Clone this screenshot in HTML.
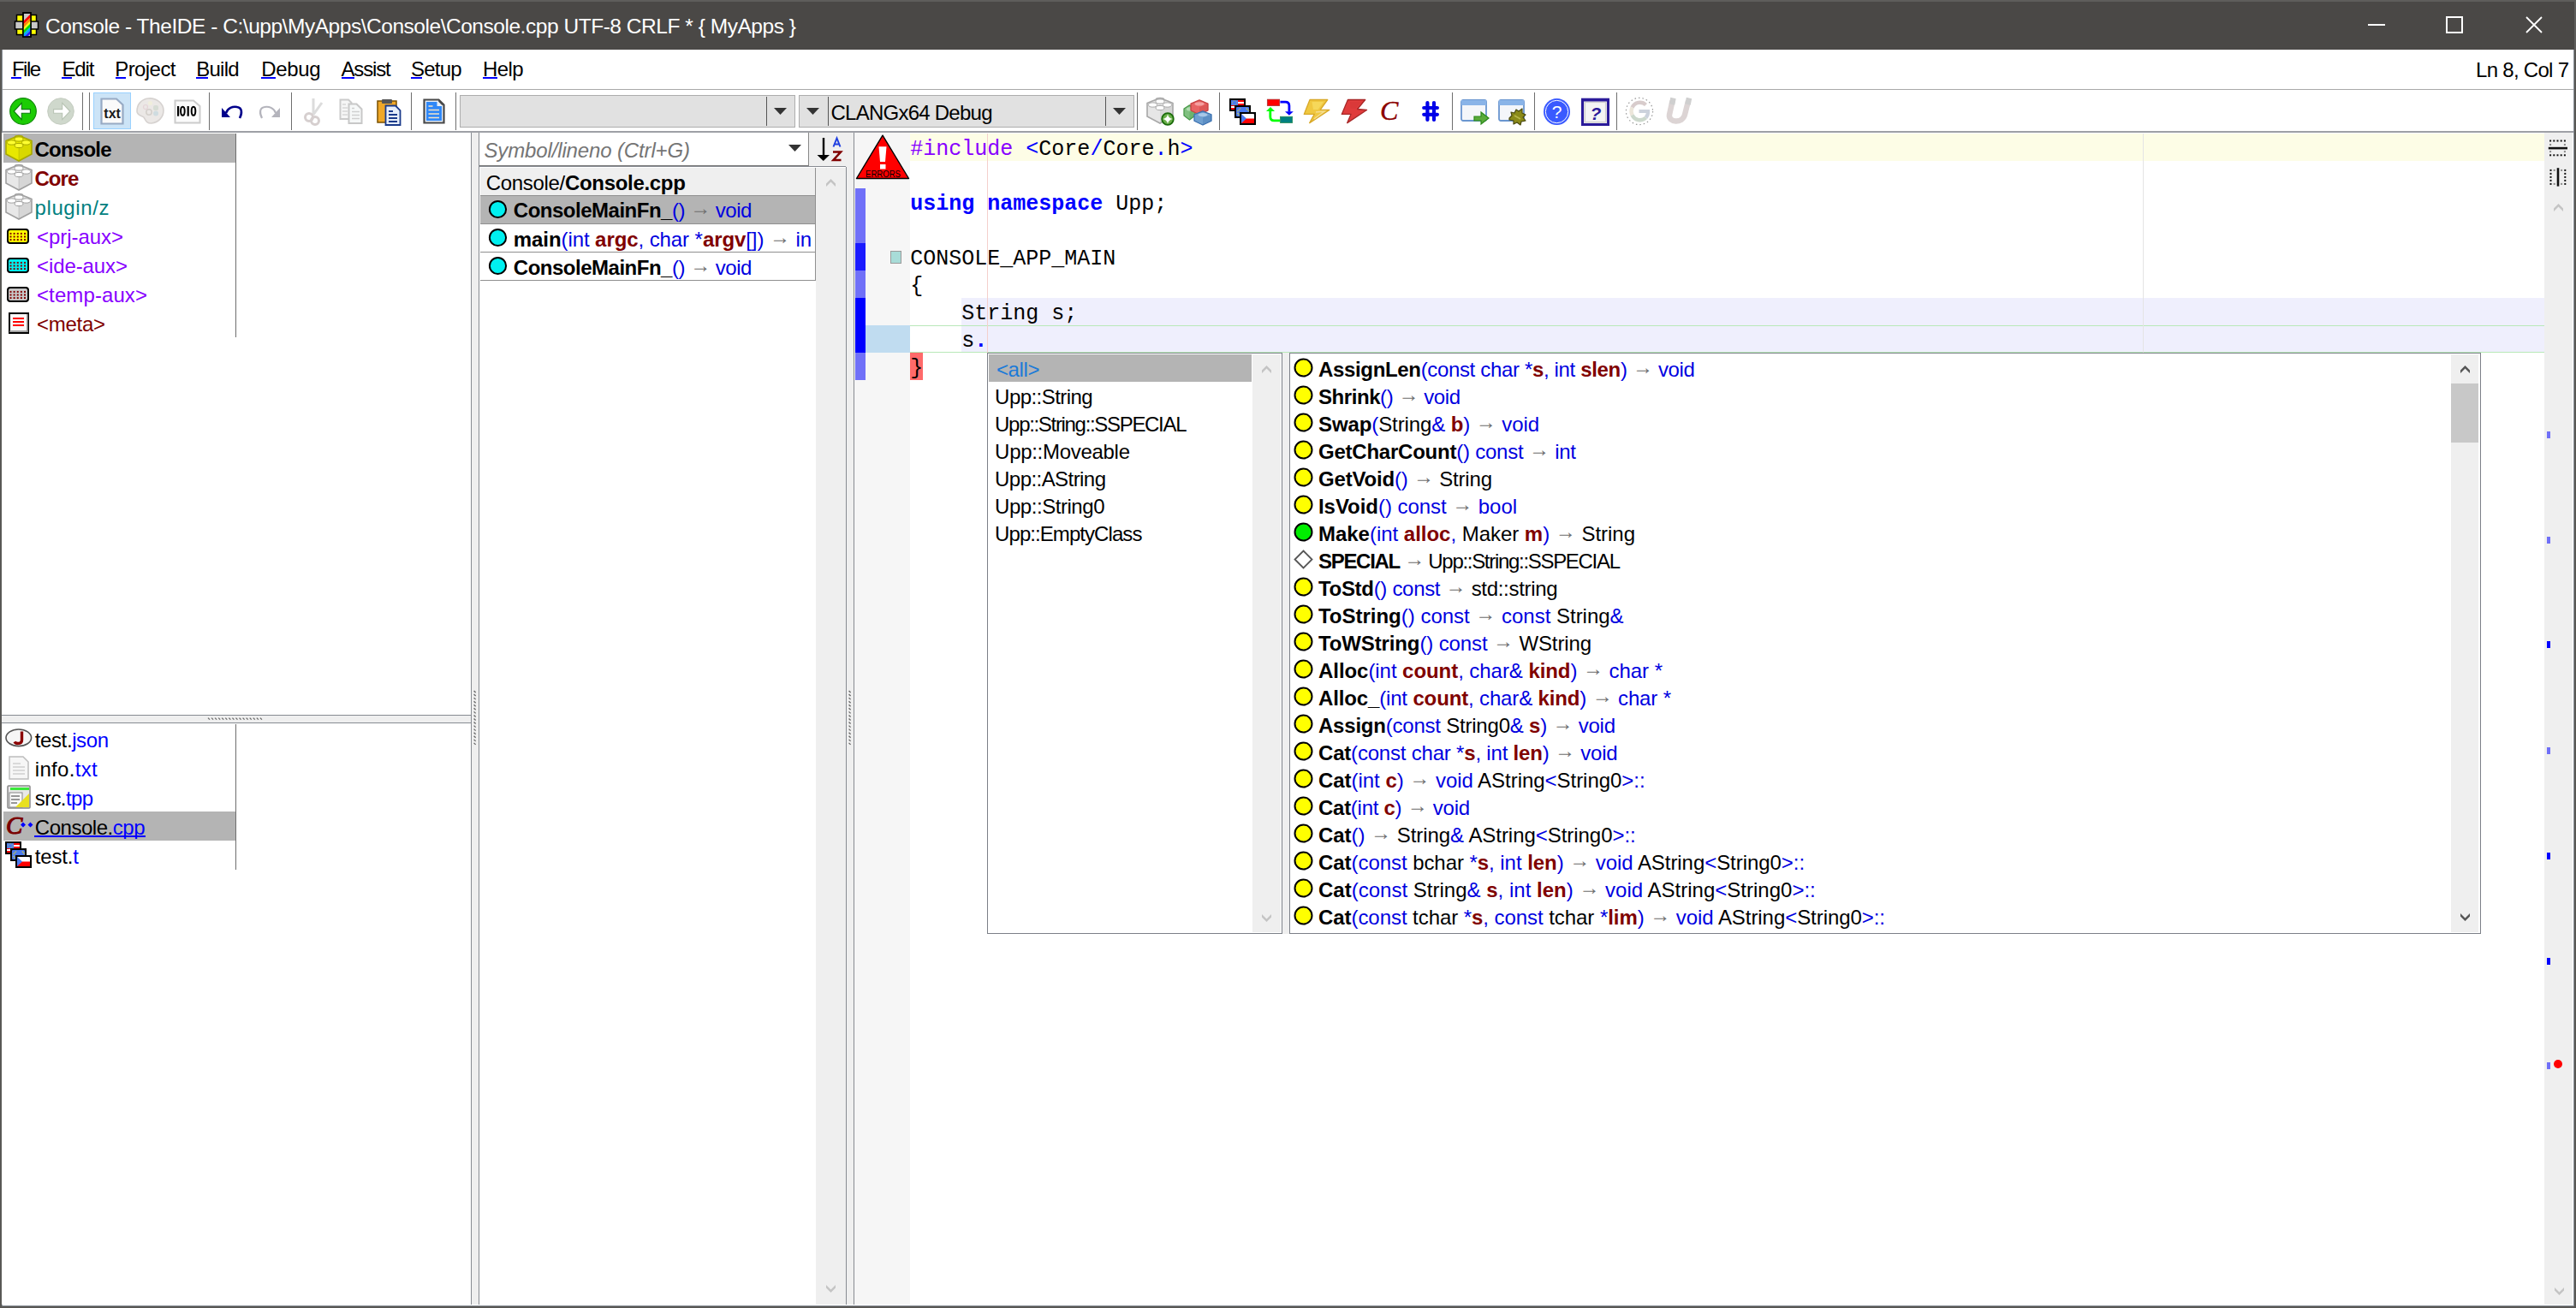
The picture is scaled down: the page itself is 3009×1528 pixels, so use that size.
<!DOCTYPE html>
<html><head><meta charset="utf-8"><style>html,body{margin:0;padding:0;width:3009px;height:1528px;overflow:hidden;background:#fff}svg{overflow:visible}</style></head><body>
<div style="position:absolute;left:0px;top:0px;width:3009px;height:1528px;background:#595855;"></div>
<div style="position:absolute;left:2px;top:58px;width:1px;height:1468px;background:#8a9098;"></div>
<div style="position:absolute;left:3006px;top:58px;width:1px;height:1468px;background:#8a9098;"></div>
<div style="position:absolute;left:2px;top:1525px;width:3005px;height:1px;background:#8a9098;"></div>
<div style="position:absolute;left:3px;top:58px;width:3003px;height:1467px;background:#ffffff;"></div>
<div style="position:absolute;left:0px;top:0px;width:3009px;height:58px;background:#5e5d5b;"></div>
<div style="position:absolute;left:0px;top:2px;width:3007px;height:56px;background:#4a4846;"></div>
<svg style="position:absolute;left:16px;top:14px" width="30" height="30" viewBox="0 0 30 30">
<rect x="3.5" y="3.5" width="23" height="23" fill="#ffff00" stroke="#000" stroke-width="1.5"/>
<rect x="1.5" y="11" width="27" height="9" fill="#c8c8c8" stroke="#000" stroke-width="1.5"/>
<defs><clipPath id="appc"><rect x="11" y="1" width="9" height="28"/></clipPath></defs>
<rect x="11" y="1" width="9" height="28" fill="#c8c8c8" stroke="#000" stroke-width="1.5"/>
<g clip-path="url(#appc)">
<polygon points="20,2 20,6 11,15 11,11" fill="#ff0000"/>
<polygon points="20,6 20,10 11,19 11,15" fill="#ff8800"/>
<polygon points="20,10 20,13 11,22 11,19" fill="#ffff00"/>
<polygon points="20,13 20,17 11,26 11,22" fill="#00dd00"/>
<polygon points="20,17 20,21 11,30 11,26" fill="#00aaff"/>
<polygon points="20,21 20,25 11,34 11,30" fill="#2222ff"/>
</g>
<rect x="11" y="1" width="9" height="28" fill="none" stroke="#000" stroke-width="1.5"/>
</svg>
<div style="position:absolute;left:53px;top:16.76px;font-family:'Liberation Sans',sans-serif;font-size:24.5px;line-height:normal;color:#ffffff;font-weight:normal;font-style:normal;white-space:pre;letter-spacing:-0.465px;">Console - TheIDE - C:\upp\MyApps\Console\Console.cpp UTF-8 CRLF * { MyApps }</div>
<div style="position:absolute;left:2766px;top:28px;width:20px;height:2px;background:#ffffff;"></div>
<div style="position:absolute;left:2857px;top:19px;width:16px;height:16px;border:2px solid #fff"></div>
<svg style="position:absolute;left:2950px;top:19px" width="20" height="20" viewBox="0 0 20 20"><path d="M1,1 L19,19 M19,1 L1,19" stroke="#fff" stroke-width="1.8"/></svg>
<div style="position:absolute;left:14px;top:66.72px;font-family:'Liberation Sans',sans-serif;font-size:24px;line-height:normal;color:#000;font-weight:normal;font-style:normal;white-space:pre;letter-spacing:-1.557px;">File</div>
<div style="position:absolute;left:13px;top:90px;width:12px;height:2px;background:#0000ff;"></div>
<div style="position:absolute;left:72.4px;top:66.72px;font-family:'Liberation Sans',sans-serif;font-size:24px;line-height:normal;color:#000;font-weight:normal;font-style:normal;white-space:pre;letter-spacing:-1.120px;">Edit</div>
<div style="position:absolute;left:72px;top:90px;width:12px;height:2px;background:#0000ff;"></div>
<div style="position:absolute;left:134.2px;top:66.72px;font-family:'Liberation Sans',sans-serif;font-size:24px;line-height:normal;color:#000;font-weight:normal;font-style:normal;white-space:pre;letter-spacing:-0.567px;">Project</div>
<div style="position:absolute;left:135px;top:90px;width:12px;height:2px;background:#0000ff;"></div>
<div style="position:absolute;left:229.3px;top:66.72px;font-family:'Liberation Sans',sans-serif;font-size:24px;line-height:normal;color:#000;font-weight:normal;font-style:normal;white-space:pre;letter-spacing:-0.769px;">Build</div>
<div style="position:absolute;left:229px;top:90px;width:14px;height:2px;background:#0000ff;"></div>
<div style="position:absolute;left:305.3px;top:66.72px;font-family:'Liberation Sans',sans-serif;font-size:24px;line-height:normal;color:#000;font-weight:normal;font-style:normal;white-space:pre;letter-spacing:-0.359px;">Debug</div>
<div style="position:absolute;left:305px;top:90px;width:17px;height:2px;background:#0000ff;"></div>
<div style="position:absolute;left:398.4px;top:66.72px;font-family:'Liberation Sans',sans-serif;font-size:24px;line-height:normal;color:#000;font-weight:normal;font-style:normal;white-space:pre;letter-spacing:-1.123px;">Assist</div>
<div style="position:absolute;left:399px;top:90px;width:15px;height:2px;background:#0000ff;"></div>
<div style="position:absolute;left:479.9px;top:66.72px;font-family:'Liberation Sans',sans-serif;font-size:24px;line-height:normal;color:#000;font-weight:normal;font-style:normal;white-space:pre;letter-spacing:-0.730px;">Setup</div>
<div style="position:absolute;left:480px;top:90px;width:13px;height:2px;background:#0000ff;"></div>
<div style="position:absolute;left:564.1px;top:66.72px;font-family:'Liberation Sans',sans-serif;font-size:24px;line-height:normal;color:#000;font-weight:normal;font-style:normal;white-space:pre;letter-spacing:-0.586px;">Help</div>
<div style="position:absolute;left:564px;top:90px;width:17px;height:2px;background:#0000ff;"></div>
<div style="position:absolute;left:2892px;top:68.22px;font-family:'Liberation Sans',sans-serif;font-size:24px;line-height:normal;color:#000;font-weight:normal;font-style:normal;white-space:pre;letter-spacing:-0.708px;">Ln 8, Col 7</div>
<div style="position:absolute;left:3px;top:104px;width:3003px;height:1px;background:#a9a9a9;"></div>
<div style="position:absolute;left:3px;top:153px;width:3003px;height:2px;background:#9ea0a6;"></div>
<div style="position:absolute;left:96px;top:108px;width:1px;height:44px;background:#6e6e6e;"></div>
<div style="position:absolute;left:104px;top:108px;width:1px;height:44px;background:#6e6e6e;"></div>
<div style="position:absolute;left:244px;top:108px;width:1px;height:44px;background:#6e6e6e;"></div>
<div style="position:absolute;left:340px;top:108px;width:1px;height:44px;background:#6e6e6e;"></div>
<div style="position:absolute;left:480px;top:108px;width:1px;height:44px;background:#6e6e6e;"></div>
<div style="position:absolute;left:532px;top:108px;width:1px;height:44px;background:#6e6e6e;"></div>
<div style="position:absolute;left:1328px;top:108px;width:1px;height:44px;background:#6e6e6e;"></div>
<div style="position:absolute;left:1424px;top:108px;width:1px;height:44px;background:#6e6e6e;"></div>
<div style="position:absolute;left:1696px;top:108px;width:1px;height:44px;background:#6e6e6e;"></div>
<div style="position:absolute;left:1792px;top:108px;width:1px;height:44px;background:#6e6e6e;"></div>
<div style="position:absolute;left:1888px;top:108px;width:1px;height:44px;background:#6e6e6e;"></div>
<svg style="position:absolute;left:11px;top:114px" width="32" height="32" viewBox="0 0 32 32"><circle cx="16" cy="16" r="15.3" fill="#1ccc04" stroke="#108a08" stroke-width="1.2"/><path d="M5.2,16 L14.3,6.4 L14.3,13.6 L24.4,13.6 L24.4,18.2 L14.3,18.2 L14.3,25.6 Z" fill="#fff" stroke="#0a7a0a" stroke-width="1.1" stroke-linejoin="miter"/></svg>
<svg style="position:absolute;left:55px;top:114px" width="32" height="32" viewBox="0 0 32 32"><circle cx="16" cy="16" r="15.3" fill="#cfd8cc" stroke="#c4ccc0" stroke-width="1"/><path d="M26.8,16 L17.7,6.4 L17.7,13.6 L7.6,13.6 L7.6,18.2 L17.7,18.2 L17.7,25.6 Z" fill="#fff" stroke="#b8c4b4" stroke-width="1.1"/></svg>
<div style="position:absolute;left:109px;top:108px;width:42px;height:41px;background:#cce4f7;border:1px solid #99d1ff"></div>
<svg style="position:absolute;left:117px;top:114px" width="28" height="32" viewBox="0 0 28 32"><path d="M1.5,1.5 L19,1.5 L26.5,8.5 L26.5,30.5 L1.5,30.5 Z" fill="#fafafa" stroke="#97aac4" stroke-width="2.2"/><text x="4.3" y="23.6" font-family="Liberation Sans" font-weight="bold" font-size="17" fill="#1a1a1a" textLength="19.6" lengthAdjust="spacingAndGlyphs">txt</text></svg>
<svg style="position:absolute;left:159px;top:114px" width="33" height="31" viewBox="0 0 33 31"><path d="M14,1 C24,0 32,7 32,15 C32,23 26,29 18,30 C12,30.5 11,26 9,23 C7,21 1,21 1,16 C1,8 6,2 14,1 Z" fill="#ebe8e6" stroke="#d6d2d0" stroke-width="1.6"/><circle cx="15" cy="17" r="3.2" fill="none" stroke="#d4d0cc" stroke-width="1.6"/><rect x="20" y="9" width="6" height="6" rx="2" fill="#d6dcd4"/><circle cx="23" cy="18.5" r="3" fill="#cfdce0"/><circle cx="11" cy="11" r="2.5" fill="none" stroke="#e4d4d8" stroke-width="1.2"/><circle cx="16.5" cy="6.5" r="2.5" fill="#f0eedc"/></svg>
<svg style="position:absolute;left:203px;top:116px" width="32" height="29" viewBox="0 0 32 29"><path d="M1.5,1.5 L23,1.5 L30.5,8 L30.5,27.5 L1.5,27.5 Z" fill="#fbfbfb" stroke="#cccccc" stroke-width="2"/><rect x="4" y="8" width="2.2" height="11.7" fill="#000"/><ellipse cx="10.4" cy="13.85" rx="2.3" ry="5" fill="none" stroke="#000" stroke-width="2"/><rect x="15.6" y="8" width="2.2" height="11.7" fill="#000"/><ellipse cx="23" cy="13.85" rx="2.3" ry="5" fill="none" stroke="#000" stroke-width="2"/></svg>
<svg style="position:absolute;left:258px;top:122px" width="26" height="18" viewBox="0 0 26 18"><path d="M6,10 C8,4 14,2 19,3 C25,4 25,10 22,16" fill="none" stroke="#00008b" stroke-width="2.6"/><polygon points="1,4 1,15 11,15" fill="#00008b"/></svg>
<svg style="position:absolute;left:302px;top:122px" width="26" height="18" viewBox="0 0 26 18"><path d="M20,10 C18,4 12,2 7,3 C1,4 1,10 4,16" fill="none" stroke="#b4b4bc" stroke-width="2.2"/><polygon points="25,4 25,15 15,15" fill="#b4b4bc"/></svg>
<svg style="position:absolute;left:354px;top:114px" width="26" height="32" viewBox="0 0 26 32"><path d="M12,1 L12,20 M22,6 L12,20" stroke="#dcdcdc" stroke-width="3"/><circle cx="7" cy="23" r="4.5" fill="none" stroke="#d6cfcf" stroke-width="3"/><circle cx="14" cy="27" r="4.5" fill="none" stroke="#d6cfcf" stroke-width="3"/></svg>
<svg style="position:absolute;left:396px;top:115px" width="30" height="31" viewBox="0 0 30 31"><path d="M1.5,1.5 L11,1.5 L14.5,5 L14.5,24 L1.5,24 Z" fill="#f6f6f6" stroke="#cbcbcb" stroke-width="2"/><path d="M11.5,6.5 L20.5,6.5 L26.5,12.5 L26.5,29 L11.5,29 Z" fill="#f6f8f8" stroke="#c8c8c8" stroke-width="2"/><path d="M15,15.5 H24 M15,19.5 H24 M15,23.5 H24 M15,11.5 H18" stroke="#cfcfcf" stroke-width="1.6"/><path d="M4,7 H8 M4,11 H10 M4,15 H10 M4,19 H10" stroke="#d6d6d6" stroke-width="1.6"/></svg>
<svg style="position:absolute;left:440px;top:115px" width="30" height="32" viewBox="0 0 30 32"><rect x="1" y="3" width="22" height="25" fill="#f0a828" stroke="#7a5000" stroke-width="1.5"/><rect x="6" y="1" width="12" height="5" rx="1" fill="#555" /><path d="M10.5,8.5 L22,8.5 L27.5,14 L27.5,31 L10.5,31 Z" fill="#e6eefa" stroke="#1a3a8a" stroke-width="1.8"/><path d="M14,15 H19 M14,19 H24 M14,23 H24 M14,27 H24" stroke="#1a3a8a" stroke-width="1.8"/></svg>
<svg style="position:absolute;left:494px;top:115px" width="26" height="30" viewBox="0 0 26 30"><path d="M1.5,1.5 L18.5,1.5 L24.5,7.5 L24.5,28.5 L1.5,28.5 Z" fill="#e6eef8" stroke="#484848" stroke-width="2.2"/><path d="M4,4 L16.5,4 L16.5,9 L22,9 L22,26 L4,26 Z" fill="#2f88f8"/><path d="M18.5,3 L23,7.5" stroke="#484848" stroke-width="1.5"/><path d="M6.5,9 H11.5 M6.5,13.5 H19 M6.5,18 H19 M6.5,22.5 H19" stroke="#f4e4c8" stroke-width="1.7"/></svg>
<div style="position:absolute;left:537px;top:111px;width:390px;height:36px;background:#e1e1e1;border:1px solid #adadad"></div>
<div style="position:absolute;left:895px;top:113px;width:1px;height:34px;background:#555;"></div>
<svg style="position:absolute;left:904px;top:126px" width="16" height="9" viewBox="0 0 16 9"><polygon points="0,0 15,0 7.5,8" fill="#333"/></svg>
<div style="position:absolute;left:933px;top:111px;width:390px;height:36px;background:#e1e1e1;border:1px solid #adadad"></div>
<div style="position:absolute;left:967px;top:113px;width:1px;height:34px;background:#555;"></div>
<svg style="position:absolute;left:942px;top:126px" width="16" height="9" viewBox="0 0 16 9"><polygon points="0,0 15,0 7.5,8" fill="#333"/></svg>
<div style="position:absolute;left:1291px;top:113px;width:1px;height:34px;background:#555;"></div>
<svg style="position:absolute;left:1300px;top:126px" width="16" height="9" viewBox="0 0 16 9"><polygon points="0,0 15,0 7.5,8" fill="#333"/></svg>
<div style="position:absolute;left:970.5px;top:117.92px;font-family:'Liberation Sans',sans-serif;font-size:24px;line-height:normal;color:#000;font-weight:normal;font-style:normal;white-space:pre;letter-spacing:-0.752px;">CLANGx64 Debug</div>
<svg style="position:absolute;left:1339px;top:114px" width="34" height="34" viewBox="0 0 34 34"><path d="M1,6.5 L7,4 L11,2.5 C12,0 20,0 21,2.5 L25,4 L31,6.5 L31,22 L16,30 L1,22 Z" fill="#e6e6e6" stroke="#a8a8a8" stroke-width="1.6"/><path d="M16,30 L31,22 L31,8 L16,14 Z" fill="#a8a8a8" opacity="0.25"/><ellipse cx="16" cy="4.5" rx="5" ry="2.6" fill="#ffffff" stroke="#a8a8a8" stroke-width="1"/><ellipse cx="7.5" cy="8.5" rx="5" ry="2.6" fill="#ffffff" stroke="#a8a8a8" stroke-width="1"/><ellipse cx="24.5" cy="8.5" rx="5" ry="2.6" fill="#ffffff" stroke="#a8a8a8" stroke-width="1"/><ellipse cx="16" cy="12" rx="5" ry="2.6" fill="#ffffff" stroke="#a8a8a8" stroke-width="1"/><circle cx="25" cy="25" r="6.8" fill="#6ab04a" stroke="#1a6a0a" stroke-width="1.8"/><path d="M25,19.5 Q26,24 30.5,25 Q26,26 25,30.5 Q24,26 19.5,25 Q24,24 25,19.5 Z" fill="#fff"/></svg>
<svg style="position:absolute;left:1382px;top:115px" width="36" height="33" viewBox="0 0 36 33"><polygon points="1,12.040000000000001 7.5,7.9 14,12.040000000000001 14,19.96 7.5,25 1,19.96" fill="#80c080" stroke="#4a9a4a" stroke-width="1.3" stroke-linejoin="round"/><polygon points="7.5,16.0 14,12.040000000000001 14,19.96 7.5,25" fill="#4a9a4a" opacity="0.35"/><ellipse cx="7.5" cy="12.399999999999999" rx="3.6400000000000006" ry="2.16" fill="#b0dcb0"/><polygon points="9,6.040000000000001 19.0,1.9 29,6.040000000000001 29,13.959999999999999 19.0,19 9,13.959999999999999" fill="#e86464" stroke="#c84040" stroke-width="1.3" stroke-linejoin="round"/><polygon points="19.0,10.0 29,6.040000000000001 29,13.959999999999999 19.0,19" fill="#c84040" opacity="0.35"/><ellipse cx="19.0" cy="6.3999999999999995" rx="5.6000000000000005" ry="2.16" fill="#f4a0a0"/><polygon points="13,18.76 23.0,14.85 33,18.76 33,26.240000000000002 23.0,31 13,26.240000000000002" fill="#70a0d0" stroke="#3a70b0" stroke-width="1.3" stroke-linejoin="round"/><polygon points="23.0,22.5 33,18.76 33,26.240000000000002 23.0,31" fill="#3a70b0" opacity="0.35"/><ellipse cx="23.0" cy="19.1" rx="5.6000000000000005" ry="2.04" fill="#a8c8e8"/></svg>
<svg style="position:absolute;left:1435px;top:114px" width="33" height="33" viewBox="0 0 33 33"><rect x="1" y="1" width="19" height="15" fill="#000"/><rect x="3" y="3" width="15" height="11" fill="#f00"/><rect x="3" y="5" width="15" height="2" fill="#fff"/><rect x="3" y="10" width="15" height="2" fill="#fff"/><rect x="3" y="3" width="8" height="6" fill="#4a7af0"/><circle cx="7" cy="6" r="2.6" fill="none" stroke="#c8c848" stroke-width="0.9" stroke-dasharray="1,1"/><rect x="7" y="9" width="19" height="15" fill="#000"/><rect x="9" y="11" width="15" height="11" rx="1" fill="#4a7af0"/><path d="M10.5,16 L14,12.5 M21,12.5 L24,16 M10.5,18 L13,21" stroke="#c8c848" stroke-width="1.6" stroke-dasharray="1.2,0.8"/><rect x="13" y="17" width="19" height="15" fill="#000"/><rect x="15" y="19" width="15" height="11" rx="1" fill="#fff"/><rect x="15" y="24.5" width="15" height="5.5" fill="#f00"/><polygon points="15,19 21,24.5 15,30" fill="#4a7af0"/></svg>
<svg style="position:absolute;left:1479px;top:116px" width="33" height="29" viewBox="0 0 33 29"><rect x="1.3" y="0.1" width="14.4" height="7.5" fill="#f00" stroke="#a03030" stroke-width="0.7"/><path d="M16.4,3.1 H22.5 Q26.9,3.1 26.9,7.5 V14.5" fill="none" stroke="#00f" stroke-width="2.8"/><polygon points="22,14.3 31.8,14.3 26.9,18.8" fill="#00f"/><rect x="16.4" y="20.2" width="14.3" height="7.4" fill="#008080" stroke="#2a8a4a" stroke-width="0.7"/><path d="M16,24.8 H9.2 Q4.8,24.8 4.8,20.4 V13.5" fill="none" stroke="#0f0" stroke-width="2.8"/><polygon points="0,14 10,14 5,9" fill="#0f0"/></svg>
<svg style="position:absolute;left:1523px;top:116px" width="31" height="29" viewBox="0 0 31 29"><path d="M7,0.5 L27.7,0.5 L19.3,12.2 L29.8,12.5 L6.7,27.6 L12.3,17.4 L0.3,17.4 Z" fill="#f0c840" stroke="#d8a828" stroke-width="1.3" stroke-linejoin="round"/><path d="M9.5,3 L23,3 L16.5,12 L11,12 Z" fill="#f8dc60" opacity="0.8"/><path d="M14,15 L24,14 L12,23" fill="none" stroke="#f4dc90" stroke-width="1.5"/></svg>
<svg style="position:absolute;left:1567px;top:116px" width="31" height="29" viewBox="0 0 31 29"><path d="M7.4,0.5 L27.7,0.5 L18.6,11.5 L29.5,12.5 L6.7,27.6 L11,17.4 L0.3,17.4 Z" fill="#e03c3c" stroke="#a82828" stroke-width="1.3" stroke-linejoin="round"/><path d="M10,3 L23,3 L16,11 L10.5,11 Z" fill="#d83838" opacity="0.8"/></svg>
<svg style="position:absolute;left:1611px;top:115px" width="30" height="28" viewBox="0 0 30 28"><text x="1" y="25" font-family="Liberation Serif" font-style="italic" font-size="32" fill="#8b0000" stroke="#8b0000" stroke-width="0.4">C</text></svg>
<svg style="position:absolute;left:1659px;top:117px" width="24" height="26" viewBox="0 0 24 26"><path d="M8.4,3 V23 M16,3 V23 M4.2,9 H19.9 M4.2,16.8 H19.9" stroke="#0000e8" stroke-width="4.2" stroke-linecap="round"/></svg>
<svg style="position:absolute;left:1706px;top:115px" width="34" height="32" viewBox="0 0 34 32"><rect x="1" y="2" width="29" height="24" rx="2" fill="#f4f6fa" stroke="#6a96d0" stroke-width="1.8"/><rect x="1" y="2" width="29" height="6" fill="#8ab4e8"/><path d="M16,21 L24,21 L24,16 L33,23 L24,30 L24,26 L16,26 Z" fill="#5aaa3a" stroke="#2a8a1a" stroke-width="1.2"/></svg>
<svg style="position:absolute;left:1750px;top:115px" width="34" height="32" viewBox="0 0 34 32"><rect x="1" y="2" width="29" height="24" rx="2" fill="#f4f6fa" stroke="#6a96d0" stroke-width="1.8"/><rect x="1" y="2" width="29" height="6" fill="#8ab4e8"/><path d="M13,23 L16,20 L15,16 L19,17 L21,13 L24,15 L28,12 L28,17 L32,19 L29,22 L32,26 L27,27 L26,31 L22,28 L18,30 L18,26 L13,25 Z" fill="#8a8a18" stroke="#4a4a10" stroke-width="1.2" stroke-linejoin="round"/><path d="M19,20 L26,24" stroke="#b8b848" stroke-width="1.5"/></svg>
<svg style="position:absolute;left:1802px;top:114px" width="33" height="33" viewBox="0 0 33 33"><circle cx="16.5" cy="16.5" r="15.5" fill="#3a5aff"/><circle cx="16.5" cy="16.5" r="13.2" fill="none" stroke="#fff" stroke-width="1"/><text x="16.5" y="24" font-family="Liberation Sans" font-size="21" text-anchor="middle" fill="#fff">?</text></svg>
<svg style="position:absolute;left:1847px;top:114px" width="33" height="33" viewBox="0 0 33 33"><rect x="1.5" y="2.2" width="30" height="29.3" fill="#e4e4e4" stroke="#2a1a9a" stroke-width="3"/><rect x="1.5" y="1" width="30" height="3.5" fill="#2a1a9a"/><rect x="4.5" y="5.5" width="24" height="23" fill="#f4f4f4" stroke="#d0d0d0" stroke-width="1.2"/><text x="17" y="26" font-family="Liberation Sans" font-weight="bold" font-style="italic" font-size="21" text-anchor="middle" fill="#2a1a9a">?</text></svg>
<svg style="position:absolute;left:1898px;top:113px" width="34" height="34" viewBox="0 0 34 34"><circle cx="17" cy="17" r="15.6" fill="#fff" stroke="#999" stroke-width="1.2" stroke-dasharray="1.5,3"/><path d="M8.6,12.5 A10,10 0 0 1 24.5,9.5" fill="none" stroke="#d8cccc" stroke-width="4.4"/><path d="M8.6,12.5 A10,10 0 0 0 8.6,21.5" fill="none" stroke="#ece6da" stroke-width="4.4"/><path d="M8.6,21.5 A10,10 0 0 0 24.5,24.5" fill="none" stroke="#ccd8cc" stroke-width="4.4"/><path d="M24.5,24.5 A10,10 0 0 0 27,17 H16.5" fill="none" stroke="#ccd2dc" stroke-width="4.2"/></svg>
<svg style="position:absolute;left:1944px;top:113px" width="34" height="34" viewBox="0 0 34 34"><path d="M9.5,5 L6,21 C4.5,30 21,32 24,21 L28,5" fill="none" stroke="#dcd4d4" stroke-width="6.5"/><path d="M10.5,1.5 L9,9 M29,1.5 L27.5,9" stroke="#cfcfcf" stroke-width="6.5"/></svg>
<div style="position:absolute;left:2px;top:155px;width:549px;height:680px;background:#ffffff;"></div>
<div style="position:absolute;left:550px;top:155px;width:1px;height:680px;background:#878b92;"></div>
<div style="position:absolute;left:4px;top:156px;width:271px;height:34px;background:#b4b4b4;"></div>
<div style="position:absolute;left:275px;top:156px;width:1px;height:238px;background:#6e6e6e;"></div>
<svg style="position:absolute;left:6px;top:158px" width="32" height="31" viewBox="0 0 32 31"><path d="M1,6.5 L7,4 L11,2.5 C12,0 20,0 21,2.5 L25,4 L31,6.5 L31,22 L16,30 L1,22 Z" fill="#e8e800" stroke="#a8a800" stroke-width="1.6"/>
<path d="M16,14 L16,30" stroke="#a8a800" stroke-width="0.8" opacity="0.5"/>
<path d="M16,30 L31,22 L31,8 L16,14 Z" fill="#a8a800" opacity="0.25"/>
<ellipse cx="16" cy="4.5" rx="5" ry="2.6" fill="#ffff30" stroke="#a8a800" stroke-width="1"/>
<ellipse cx="7.5" cy="8.5" rx="5" ry="2.6" fill="#ffff30" stroke="#a8a800" stroke-width="1"/>
<ellipse cx="24.5" cy="8.5" rx="5" ry="2.6" fill="#ffff30" stroke="#a8a800" stroke-width="1"/>
<ellipse cx="16" cy="12" rx="5" ry="2.6" fill="#ffff30" stroke="#a8a800" stroke-width="1"/></svg>
<svg style="position:absolute;left:6px;top:192px" width="32" height="31" viewBox="0 0 32 31"><path d="M1,6.5 L7,4 L11,2.5 C12,0 20,0 21,2.5 L25,4 L31,6.5 L31,22 L16,30 L1,22 Z" fill="#e8e8e8" stroke="#a0a0a0" stroke-width="1.6"/>
<path d="M16,14 L16,30" stroke="#a0a0a0" stroke-width="0.8" opacity="0.5"/>
<path d="M16,30 L31,22 L31,8 L16,14 Z" fill="#a0a0a0" opacity="0.25"/>
<ellipse cx="16" cy="4.5" rx="5" ry="2.6" fill="#ffffff" stroke="#a0a0a0" stroke-width="1"/>
<ellipse cx="7.5" cy="8.5" rx="5" ry="2.6" fill="#ffffff" stroke="#a0a0a0" stroke-width="1"/>
<ellipse cx="24.5" cy="8.5" rx="5" ry="2.6" fill="#ffffff" stroke="#a0a0a0" stroke-width="1"/>
<ellipse cx="16" cy="12" rx="5" ry="2.6" fill="#ffffff" stroke="#a0a0a0" stroke-width="1"/></svg>
<svg style="position:absolute;left:6px;top:226px" width="32" height="31" viewBox="0 0 32 31"><path d="M1,6.5 L7,4 L11,2.5 C12,0 20,0 21,2.5 L25,4 L31,6.5 L31,22 L16,30 L1,22 Z" fill="#e8e8e8" stroke="#a0a0a0" stroke-width="1.6"/>
<path d="M16,14 L16,30" stroke="#a0a0a0" stroke-width="0.8" opacity="0.5"/>
<path d="M16,30 L31,22 L31,8 L16,14 Z" fill="#a0a0a0" opacity="0.25"/>
<ellipse cx="16" cy="4.5" rx="5" ry="2.6" fill="#ffffff" stroke="#a0a0a0" stroke-width="1"/>
<ellipse cx="7.5" cy="8.5" rx="5" ry="2.6" fill="#ffffff" stroke="#a0a0a0" stroke-width="1"/>
<ellipse cx="24.5" cy="8.5" rx="5" ry="2.6" fill="#ffffff" stroke="#a0a0a0" stroke-width="1"/>
<ellipse cx="16" cy="12" rx="5" ry="2.6" fill="#ffffff" stroke="#a0a0a0" stroke-width="1"/></svg>
<div style="position:absolute;left:40.5px;top:161.42px;font-family:'Liberation Sans',sans-serif;font-size:24px;line-height:normal;color:#000;font-weight:bold;font-style:normal;white-space:pre;letter-spacing:-0.781px;">Console</div>
<div style="position:absolute;left:40.5px;top:195.42px;font-family:'Liberation Sans',sans-serif;font-size:24px;line-height:normal;color:#800000;font-weight:bold;font-style:normal;white-space:pre;letter-spacing:-0.963px;">Core</div>
<div style="position:absolute;left:40.5px;top:229.22px;font-family:'Liberation Sans',sans-serif;font-size:24px;line-height:normal;color:#008080;font-weight:normal;font-style:normal;white-space:pre;letter-spacing:0.609px;">plugin/z</div>
<svg style="position:absolute;left:8px;top:266.5px" width="26" height="18" viewBox="0 0 26 18"><rect x="1" y="1" width="24" height="16" rx="3" fill="#ffff00" stroke="#000" stroke-width="2"/><rect x="3.50" y="4.90" width="2" height="2" fill="#800000"/><rect x="3.50" y="8.50" width="2" height="2" fill="#800000"/><rect x="3.50" y="12.10" width="2" height="2" fill="#800000"/><rect x="7.62" y="4.90" width="2" height="2" fill="#800000"/><rect x="7.62" y="8.50" width="2" height="2" fill="#800000"/><rect x="7.62" y="12.10" width="2" height="2" fill="#800000"/><rect x="11.74" y="4.90" width="2" height="2" fill="#800000"/><rect x="11.74" y="8.50" width="2" height="2" fill="#800000"/><rect x="11.74" y="12.10" width="2" height="2" fill="#800000"/><rect x="15.86" y="4.90" width="2" height="2" fill="#800000"/><rect x="15.86" y="8.50" width="2" height="2" fill="#800000"/><rect x="15.86" y="12.10" width="2" height="2" fill="#800000"/><rect x="19.98" y="4.90" width="2" height="2" fill="#800000"/><rect x="19.98" y="8.50" width="2" height="2" fill="#800000"/><rect x="19.98" y="12.10" width="2" height="2" fill="#800000"/></svg>
<svg style="position:absolute;left:8px;top:300.5px" width="26" height="18" viewBox="0 0 26 18"><rect x="1" y="1" width="24" height="16" rx="3" fill="#00f0f0" stroke="#000" stroke-width="2"/><rect x="3.50" y="4.90" width="2" height="2" fill="#800000"/><rect x="3.50" y="8.50" width="2" height="2" fill="#800000"/><rect x="3.50" y="12.10" width="2" height="2" fill="#800000"/><rect x="7.62" y="4.90" width="2" height="2" fill="#800000"/><rect x="7.62" y="8.50" width="2" height="2" fill="#800000"/><rect x="7.62" y="12.10" width="2" height="2" fill="#800000"/><rect x="11.74" y="4.90" width="2" height="2" fill="#800000"/><rect x="11.74" y="8.50" width="2" height="2" fill="#800000"/><rect x="11.74" y="12.10" width="2" height="2" fill="#800000"/><rect x="15.86" y="4.90" width="2" height="2" fill="#800000"/><rect x="15.86" y="8.50" width="2" height="2" fill="#800000"/><rect x="15.86" y="12.10" width="2" height="2" fill="#800000"/><rect x="19.98" y="4.90" width="2" height="2" fill="#800000"/><rect x="19.98" y="8.50" width="2" height="2" fill="#800000"/><rect x="19.98" y="12.10" width="2" height="2" fill="#800000"/></svg>
<svg style="position:absolute;left:8px;top:334.5px" width="26" height="18" viewBox="0 0 26 18"><rect x="1" y="1" width="24" height="16" rx="3" fill="#c8c8c8" stroke="#000" stroke-width="2"/><rect x="3.50" y="4.90" width="2" height="2" fill="#800000"/><rect x="3.50" y="8.50" width="2" height="2" fill="#800000"/><rect x="3.50" y="12.10" width="2" height="2" fill="#800000"/><rect x="7.62" y="4.90" width="2" height="2" fill="#800000"/><rect x="7.62" y="8.50" width="2" height="2" fill="#800000"/><rect x="7.62" y="12.10" width="2" height="2" fill="#800000"/><rect x="11.74" y="4.90" width="2" height="2" fill="#800000"/><rect x="11.74" y="8.50" width="2" height="2" fill="#800000"/><rect x="11.74" y="12.10" width="2" height="2" fill="#800000"/><rect x="15.86" y="4.90" width="2" height="2" fill="#800000"/><rect x="15.86" y="8.50" width="2" height="2" fill="#800000"/><rect x="15.86" y="12.10" width="2" height="2" fill="#800000"/><rect x="19.98" y="4.90" width="2" height="2" fill="#800000"/><rect x="19.98" y="8.50" width="2" height="2" fill="#800000"/><rect x="19.98" y="12.10" width="2" height="2" fill="#800000"/></svg>
<div style="position:absolute;left:43px;top:262.72px;font-family:'Liberation Sans',sans-serif;font-size:24px;line-height:normal;color:#8800ff;font-weight:normal;font-style:normal;white-space:pre;letter-spacing:-0.049px;">&lt;prj-aux&gt;</div>
<div style="position:absolute;left:43px;top:296.92px;font-family:'Liberation Sans',sans-serif;font-size:24px;line-height:normal;color:#8800ff;font-weight:normal;font-style:normal;white-space:pre;letter-spacing:-0.094px;">&lt;ide-aux&gt;</div>
<div style="position:absolute;left:43px;top:330.92px;font-family:'Liberation Sans',sans-serif;font-size:24px;line-height:normal;color:#8800ff;font-weight:normal;font-style:normal;white-space:pre;letter-spacing:0.102px;">&lt;temp-aux&gt;</div>
<svg style="position:absolute;left:10px;top:365px" width="24" height="25" viewBox="0 0 24 25"><rect x="1" y="1" width="22" height="23" fill="#fafafa" stroke="#000" stroke-width="2"/><path d="M1,22 H23 M22,2 V23" stroke="#888" stroke-width="1.5"/><path d="M5,7 H18 M5,11 H18 M5,15 H18" stroke="#f00" stroke-width="2"/></svg>
<div style="position:absolute;left:43px;top:364.92px;font-family:'Liberation Sans',sans-serif;font-size:24px;line-height:normal;color:#800000;font-weight:normal;font-style:normal;white-space:pre;letter-spacing:-0.278px;">&lt;meta&gt;</div>
<div style="position:absolute;left:2px;top:835px;width:549px;height:10px;background:#efefef;"></div>
<div style="position:absolute;left:2px;top:835px;width:549px;height:1px;background:#878b92;"></div>
<div style="position:absolute;left:2px;top:844px;width:549px;height:1px;background:#878b92;"></div>
<svg style="position:absolute;left:242px;top:838px" width="66" height="4" viewBox="0 0 66 4"><path d="M1.00,0.6 L3.00,2.6" stroke="#666" stroke-width="1.3"/><path d="M5.06,0.6 L7.06,2.6" stroke="#666" stroke-width="1.3"/><path d="M9.12,0.6 L11.12,2.6" stroke="#666" stroke-width="1.3"/><path d="M13.18,0.6 L15.18,2.6" stroke="#666" stroke-width="1.3"/><path d="M17.24,0.6 L19.24,2.6" stroke="#666" stroke-width="1.3"/><path d="M21.30,0.6 L23.30,2.6" stroke="#666" stroke-width="1.3"/><path d="M25.36,0.6 L27.36,2.6" stroke="#666" stroke-width="1.3"/><path d="M29.42,0.6 L31.42,2.6" stroke="#666" stroke-width="1.3"/><path d="M33.48,0.6 L35.48,2.6" stroke="#666" stroke-width="1.3"/><path d="M37.54,0.6 L39.54,2.6" stroke="#666" stroke-width="1.3"/><path d="M41.60,0.6 L43.60,2.6" stroke="#666" stroke-width="1.3"/><path d="M45.66,0.6 L47.66,2.6" stroke="#666" stroke-width="1.3"/><path d="M49.72,0.6 L51.72,2.6" stroke="#666" stroke-width="1.3"/><path d="M53.78,0.6 L55.78,2.6" stroke="#666" stroke-width="1.3"/><path d="M57.84,0.6 L59.84,2.6" stroke="#666" stroke-width="1.3"/><path d="M61.90,0.6 L63.90,2.6" stroke="#666" stroke-width="1.3"/></svg>
<div style="position:absolute;left:2px;top:845px;width:549px;height:679px;background:#ffffff;"></div>
<div style="position:absolute;left:550px;top:835px;width:1px;height:689px;background:#878b92;"></div>
<div style="position:absolute;left:4px;top:948px;width:271px;height:34px;background:#b4b4b4;"></div>
<div style="position:absolute;left:275px;top:846px;width:1px;height:170px;background:#6e6e6e;"></div>
<svg style="position:absolute;left:6px;top:851px" width="32" height="23" viewBox="0 0 32 23"><ellipse cx="15.8" cy="10.8" rx="14.8" ry="9.8" fill="#f6f6f6" stroke="#555" stroke-width="1.6"/><path d="M19.5,3.5 V13.5 Q19.5,17.5 15,17.5 Q12,17.5 11,15.5" fill="none" stroke="#8b0000" stroke-width="3.4"/></svg>
<div style="position:absolute;left:40.8px;top:850.92px;font-family:'Liberation Sans',sans-serif;font-size:24px;line-height:normal;color:#000;font-weight:normal;font-style:normal;white-space:pre;letter-spacing:-0.399px;">test.<span style="color:#0000ff">json</span></div>
<svg style="position:absolute;left:10px;top:883px" width="24" height="28" viewBox="0 0 24 28"><path d="M1,1 L17,1 L23,7 L23,27 L1,27 Z" fill="#f6f6f6" stroke="#bdbdbd" stroke-width="1.5"/><path d="M5,9 H14 M5,13 H19 M5,17 H19 M5,21 H19" stroke="#d0d0d0" stroke-width="1.5"/></svg>
<div style="position:absolute;left:40.8px;top:884.92px;font-family:'Liberation Sans',sans-serif;font-size:24px;line-height:normal;color:#000;font-weight:normal;font-style:normal;white-space:pre;letter-spacing:0.312px;">info.<span style="color:#0000ff">txt</span></div>
<svg style="position:absolute;left:8px;top:917px" width="29" height="29" viewBox="0 0 29 29"><rect x="1" y="1" width="26" height="26" rx="1" fill="#e8e8e8" stroke="#888" stroke-width="1.5"/><rect x="4" y="3" width="22" height="3" fill="#3ae83a"/><rect x="3" y="9" width="15" height="17" fill="#f8f8f8" stroke="#888"/><polygon points="10,26 26,10 26,26" fill="#e8e020"/><path d="M5,13 H15 M5,17 H15 M5,21 H12" stroke="#777" stroke-width="1.4"/></svg>
<div style="position:absolute;left:40.8px;top:918.92px;font-family:'Liberation Sans',sans-serif;font-size:24px;line-height:normal;color:#000;font-weight:normal;font-style:normal;white-space:pre;letter-spacing:-0.641px;">src.<span style="color:#0000ff">tpp</span></div>
<svg style="position:absolute;left:6px;top:951px" width="34" height="27" viewBox="0 0 34 27"><text x="1" y="22.5" font-family="Liberation Serif" font-style="italic" font-size="29" fill="#7a0000" stroke="#7a0000" stroke-width="1.1">C</text><path d="M21,9.5 L24,12.5 L21,15.5 L18,12.5 Z M29.5,9.5 L32.5,12.5 L29.5,15.5 L26.5,12.5 Z" fill="#0000ff"/></svg>
<div style="position:absolute;left:40.8px;top:952.52px;font-family:'Liberation Sans',sans-serif;font-size:24px;line-height:normal;color:#000;font-weight:normal;font-style:normal;white-space:pre;letter-spacing:-0.464px;">Console.<span style="color:#0000ff">cpp</span></div>
<div style="position:absolute;left:40px;top:976px;width:130px;height:1.5px;background:#0000ff;"></div>
<svg style="position:absolute;left:5px;top:982px" width="33" height="33" viewBox="0 0 33 33"><rect x="1" y="1" width="19" height="15" fill="#000"/><rect x="3" y="3" width="15" height="11" fill="#f00"/><rect x="3" y="5" width="15" height="2" fill="#fff"/><rect x="3" y="10" width="15" height="2" fill="#fff"/><rect x="3" y="3" width="8" height="6" fill="#4a7af0"/><circle cx="7" cy="6" r="2.6" fill="none" stroke="#c8c848" stroke-width="0.9" stroke-dasharray="1,1"/><rect x="7" y="9" width="19" height="15" fill="#000"/><rect x="9" y="11" width="15" height="11" rx="1" fill="#4a7af0"/><path d="M10.5,16 L14,12.5 M21,12.5 L24,16 M10.5,18 L13,21" stroke="#c8c848" stroke-width="1.6" stroke-dasharray="1.2,0.8"/><rect x="13" y="17" width="19" height="15" fill="#000"/><rect x="15" y="19" width="15" height="11" rx="1" fill="#fff"/><rect x="15" y="24.5" width="15" height="5.5" fill="#f00"/><polygon points="15,19 21,24.5 15,30" fill="#4a7af0"/></svg>
<div style="position:absolute;left:40.8px;top:986.52px;font-family:'Liberation Sans',sans-serif;font-size:24px;line-height:normal;color:#000;font-weight:normal;font-style:normal;white-space:pre;letter-spacing:-0.166px;">test.<span style="color:#0000ff">t</span></div>
<div style="position:absolute;left:551px;top:155px;width:8px;height:1369px;background:#efefef;"></div>
<svg style="position:absolute;left:553px;top:806px" width="4" height="66" viewBox="0 0 4 66"><path d="M0.6,1.00 L2.6,3.00" stroke="#666" stroke-width="1.3"/><path d="M0.6,5.06 L2.6,7.06" stroke="#666" stroke-width="1.3"/><path d="M0.6,9.12 L2.6,11.12" stroke="#666" stroke-width="1.3"/><path d="M0.6,13.18 L2.6,15.18" stroke="#666" stroke-width="1.3"/><path d="M0.6,17.24 L2.6,19.24" stroke="#666" stroke-width="1.3"/><path d="M0.6,21.30 L2.6,23.30" stroke="#666" stroke-width="1.3"/><path d="M0.6,25.36 L2.6,27.36" stroke="#666" stroke-width="1.3"/><path d="M0.6,29.42 L2.6,31.42" stroke="#666" stroke-width="1.3"/><path d="M0.6,33.48 L2.6,35.48" stroke="#666" stroke-width="1.3"/><path d="M0.6,37.54 L2.6,39.54" stroke="#666" stroke-width="1.3"/><path d="M0.6,41.60 L2.6,43.60" stroke="#666" stroke-width="1.3"/><path d="M0.6,45.66 L2.6,47.66" stroke="#666" stroke-width="1.3"/><path d="M0.6,49.72 L2.6,51.72" stroke="#666" stroke-width="1.3"/><path d="M0.6,53.78 L2.6,55.78" stroke="#666" stroke-width="1.3"/><path d="M0.6,57.84 L2.6,59.84" stroke="#666" stroke-width="1.3"/><path d="M0.6,61.90 L2.6,63.90" stroke="#666" stroke-width="1.3"/></svg>
<div style="position:absolute;left:559px;top:155px;width:438px;height:1369px;background:#efefef;"></div>
<div style="position:absolute;left:559px;top:155px;width:385px;height:38px;background:#fff;border-right:1px solid #888;border-bottom:2px solid #777;box-sizing:border-box;width:386px;height:40px"></div>
<div style="position:absolute;left:559px;top:155px;width:1px;height:1369px;background:#878b92;"></div>
<div style="position:absolute;left:565.5px;top:161.52px;font-family:'Liberation Sans',sans-serif;font-size:24px;line-height:normal;color:#757575;font-weight:normal;font-style:italic;white-space:pre;letter-spacing:-0.139px;">Symbol/lineno (Ctrl+G)</div>
<svg style="position:absolute;left:921px;top:169px" width="16" height="9" viewBox="0 0 16 9"><polygon points="0,0 15,0 7.5,8" fill="#333"/></svg>
<svg style="position:absolute;left:954px;top:158px" width="30" height="32" viewBox="0 0 30 32"><path d="M8,3 V26" stroke="#000" stroke-width="2.4"/><polygon points="0.5,23 15,23 7.75,30" fill="#000"/><path d="M19.5,13.5 L23.5,3.5 L27.5,13.5 M20.8,10.5 H26.2" fill="none" stroke="#2040e0" stroke-width="2"/><path d="M19,19.5 H28 L19.5,29 H28.5" fill="none" stroke="#800000" stroke-width="2.6"/></svg>
<div style="position:absolute;left:560px;top:195px;width:428px;height:1329px;background:#ffffff;"></div>
<div style="position:absolute;left:988px;top:195px;width:1px;height:1329px;background:#878b92;"></div>
<div style="position:absolute;left:560px;top:194px;width:428px;height:1px;background:#878b92;"></div>
<div style="position:absolute;left:953px;top:196px;width:35px;height:1328px;background:#efefef;"></div>
<svg style="position:absolute;left:964.5px;top:209.0px" width="11" height="9" viewBox="0 0 11 9"><polygon points="0,9 5.5,3.5 11,9 11,5.5 5.5,0 0,5.5" fill="#c4c4c4"/></svg>
<svg style="position:absolute;left:964.5px;top:1501.0px" width="11" height="9" viewBox="0 0 11 9"><polygon points="0,0 5.5,5.5 11,0 11,3.5 5.5,9 0,3.5" fill="#c4c4c4"/></svg>
<div style="position:absolute;left:561px;top:196px;width:392px;height:32px;background:#efefef;"></div>
<div style="position:absolute;left:567.8px;top:200.32px;font-family:'Liberation Sans',sans-serif;font-size:24px;line-height:normal;color:#000;font-weight:normal;font-style:normal;white-space:pre;letter-spacing:-0.319px;">Console/<b>Console.cpp</b></div>
<div style="position:absolute;left:561px;top:228px;width:391px;height:33px;background:#b4b4b4;"></div>
<div style="position:absolute;left:561px;top:228px;width:391px;height:1px;background:#8f8f8f;"></div>
<div style="position:absolute;left:561px;top:261px;width:391px;height:1px;background:#8f8f8f;"></div>
<div style="position:absolute;left:561px;top:294px;width:391px;height:1px;background:#8f8f8f;"></div>
<div style="position:absolute;left:561px;top:327px;width:391px;height:1px;background:#8f8f8f;"></div>
<div style="position:absolute;left:952px;top:196px;width:1px;height:132px;background:#8f8f8f;"></div>
<svg style="position:absolute;left:570px;top:233px" width="24" height="24" viewBox="0 0 24 24"><circle cx="11.5" cy="11.5" r="9.6" fill="#00f0f0" stroke="#000" stroke-width="2"/></svg>
<svg style="position:absolute;left:570px;top:266px" width="24" height="24" viewBox="0 0 24 24"><circle cx="11.5" cy="11.5" r="9.6" fill="#00f0f0" stroke="#000" stroke-width="2"/></svg>
<svg style="position:absolute;left:570px;top:299px" width="24" height="24" viewBox="0 0 24 24"><circle cx="11.5" cy="11.5" r="9.6" fill="#00f0f0" stroke="#000" stroke-width="2"/></svg>
<div style="position:absolute;left:599.8px;top:232.42px;font-family:'Liberation Sans',sans-serif;font-size:24px;line-height:normal;color:#000;font-weight:normal;font-style:normal;white-space:pre;letter-spacing:-0.490px;"><b>ConsoleMainFn_</b><span style="color:#0000e0">()</span> <span style="color:#707070;position:relative;top:-3px">→</span> <span style="color:#0000e0">void</span></div>
<div style="position:absolute;left:561px;top:261px;width:391px;height:33px;overflow:hidden">
<div style="position:absolute;left:38.799999999999955px;top:5.42px;font-family:'Liberation Sans',sans-serif;font-size:24px;line-height:normal;color:#000;font-weight:normal;font-style:normal;white-space:pre;letter-spacing:-0.082px;"><b>main</b><span style="color:#0000e0">(int </span><b style="color:#800000">argc</b><span style="color:#0000e0">, char *</span><b style="color:#800000">argv</b><span style="color:#0000e0">[])</span> <span style="color:#707070;position:relative;top:-3px">→</span> <span style="color:#0000e0">in</span></div>
</div>
<div style="position:absolute;left:599.8px;top:298.92px;font-family:'Liberation Sans',sans-serif;font-size:24px;line-height:normal;color:#000;font-weight:normal;font-style:normal;white-space:pre;letter-spacing:-0.490px;"><b>ConsoleMainFn_</b><span style="color:#0000e0">()</span> <span style="color:#707070;position:relative;top:-3px">→</span> <span style="color:#0000e0">void</span></div>
<svg style="position:absolute;left:991px;top:806px" width="4" height="66" viewBox="0 0 4 66"><path d="M0.6,1.00 L2.6,3.00" stroke="#666" stroke-width="1.3"/><path d="M0.6,5.06 L2.6,7.06" stroke="#666" stroke-width="1.3"/><path d="M0.6,9.12 L2.6,11.12" stroke="#666" stroke-width="1.3"/><path d="M0.6,13.18 L2.6,15.18" stroke="#666" stroke-width="1.3"/><path d="M0.6,17.24 L2.6,19.24" stroke="#666" stroke-width="1.3"/><path d="M0.6,21.30 L2.6,23.30" stroke="#666" stroke-width="1.3"/><path d="M0.6,25.36 L2.6,27.36" stroke="#666" stroke-width="1.3"/><path d="M0.6,29.42 L2.6,31.42" stroke="#666" stroke-width="1.3"/><path d="M0.6,33.48 L2.6,35.48" stroke="#666" stroke-width="1.3"/><path d="M0.6,37.54 L2.6,39.54" stroke="#666" stroke-width="1.3"/><path d="M0.6,41.60 L2.6,43.60" stroke="#666" stroke-width="1.3"/><path d="M0.6,45.66 L2.6,47.66" stroke="#666" stroke-width="1.3"/><path d="M0.6,49.72 L2.6,51.72" stroke="#666" stroke-width="1.3"/><path d="M0.6,53.78 L2.6,55.78" stroke="#666" stroke-width="1.3"/><path d="M0.6,57.84 L2.6,59.84" stroke="#666" stroke-width="1.3"/><path d="M0.6,61.90 L2.6,63.90" stroke="#666" stroke-width="1.3"/></svg>
<div style="position:absolute;left:997px;top:155px;width:1px;height:1369px;background:#878b92;"></div>
<div style="position:absolute;left:998px;top:155px;width:1974px;height:1369px;background:#ffffff;"></div>
<div style="position:absolute;left:998px;top:155px;width:65px;height:1369px;background:#f6f6f6;"></div>
<div style="position:absolute;left:2972px;top:155px;width:33px;height:1369px;background:#efefef;"></div>
<div style="position:absolute;left:1063px;top:156px;width:1909px;height:32px;background:#fdfde6;"></div>
<div style="position:absolute;left:1123px;top:348px;width:1849px;height:64px;background:#efeffd;"></div>
<div style="position:absolute;left:1063px;top:379.5px;width:1909px;height:1px;background:#b8e8b8;"></div>
<div style="position:absolute;left:1063px;top:411px;width:1909px;height:1px;background:#b8e8b8;"></div>
<div style="position:absolute;left:1011px;top:380px;width:52px;height:32px;background:#c0dcf0;"></div>
<div style="position:absolute;left:2503px;top:156px;width:1px;height:256px;background:#e4e4e4;"></div>
<div style="position:absolute;left:1153px;top:156px;width:1px;height:256px;background:#f4d0cc;"></div>
<div style="position:absolute;left:999px;top:220px;width:12px;height:64px;background:#7070f8;"></div>
<div style="position:absolute;left:999px;top:284px;width:12px;height:32px;background:#1a1aff;"></div>
<div style="position:absolute;left:999px;top:316px;width:12px;height:32px;background:#7070f8;"></div>
<div style="position:absolute;left:999px;top:348px;width:12px;height:64px;background:#0000ff;"></div>
<div style="position:absolute;left:999px;top:412px;width:12px;height:32px;background:#7070f8;"></div>
<div style="position:absolute;left:1040px;top:293px;width:11px;height:13px;background:#a8dcd8;border:1px solid #9a9a9a"></div>
<div style="position:absolute;left:1063px;top:412px;width:15px;height:32px;background:#ff6a6a;"></div>
<svg style="position:absolute;left:999px;top:157px" width="64" height="53" viewBox="0 0 64 53"><polygon points="32,1.2 62.5,51.5 1.5,51.5" fill="#ff0000" stroke="#000" stroke-width="1.4" stroke-linejoin="round"/><polygon points="27.5,14.3 36.5,14.3 35,32 29,32" fill="#fff"/><rect x="29" y="35" width="6.5" height="5.5" fill="#fff"/><text x="32.5" y="50" font-family="Liberation Sans" font-size="10" text-anchor="middle" fill="#000" textLength="41" lengthAdjust="spacingAndGlyphs">ERRORS</text></svg>
<div style="position:absolute;left:1063.3px;top:159.95px;font-family:'Liberation Mono',monospace;font-size:25px;line-height:normal;color:#000;font-weight:normal;font-style:normal;white-space:pre;"><span style="color:#8800ff">#include</span> <span style="color:#0000ff">&lt;</span>Core<span style="color:#0000ff">/</span>Core<span style="color:#0000ff">.</span>h<span style="color:#0000ff">&gt;</span></div>
<div style="position:absolute;left:1063.3px;top:223.95px;font-family:'Liberation Mono',monospace;font-size:25px;line-height:normal;color:#000;font-weight:normal;font-style:normal;white-space:pre;"><b style="color:#0000ff">using</b> <b style="color:#0000ff">namespace</b> Upp;</div>
<div style="position:absolute;left:1063.3px;top:287.95px;font-family:'Liberation Mono',monospace;font-size:25px;line-height:normal;color:#000;font-weight:normal;font-style:normal;white-space:pre;">CONSOLE_APP_MAIN</div>
<div style="position:absolute;left:1063.3px;top:319.95px;font-family:'Liberation Mono',monospace;font-size:25px;line-height:normal;color:#000;font-weight:normal;font-style:normal;white-space:pre;">{</div>
<div style="position:absolute;left:1123.3px;top:351.95px;font-family:'Liberation Mono',monospace;font-size:25px;line-height:normal;color:#000;font-weight:normal;font-style:normal;white-space:pre;">String s;</div>
<div style="position:absolute;left:1123.3px;top:383.95px;font-family:'Liberation Mono',monospace;font-size:25px;line-height:normal;color:#000;font-weight:normal;font-style:normal;white-space:pre;">s<b style="color:#0000ff">.</b></div>
<div style="position:absolute;left:1063.3px;top:415.95px;font-family:'Liberation Mono',monospace;font-size:25px;line-height:normal;color:#000;font-weight:normal;font-style:normal;white-space:pre;">}</div>
<svg style="position:absolute;left:0px;top:0px" width="3009" height="300" viewBox="0 0 3009 300"><rect x="2978.1" y="163.5" width="2" height="2" fill="#111"/><rect x="2978.1" y="180.3" width="2" height="2" fill="#111"/><rect x="2982.3" y="163.5" width="2" height="2" fill="#111"/><rect x="2982.3" y="180.3" width="2" height="2" fill="#111"/><rect x="2986.5" y="163.5" width="2" height="2" fill="#111"/><rect x="2986.5" y="180.3" width="2" height="2" fill="#111"/><rect x="2990.7" y="163.5" width="2" height="2" fill="#111"/><rect x="2990.7" y="180.3" width="2" height="2" fill="#111"/><rect x="2994.9" y="163.5" width="2" height="2" fill="#111"/><rect x="2994.9" y="180.3" width="2" height="2" fill="#111"/><rect x="2978.1" y="168.0" width="2" height="2" fill="#888"/><rect x="2978.1" y="176.1" width="2" height="2" fill="#888"/><rect x="2994.9" y="168.0" width="2" height="2" fill="#888"/><rect x="2994.9" y="176.1" width="2" height="2" fill="#888"/><rect x="2976.8" y="171.8" width="22.2" height="2.6" fill="#111"/><rect x="2978.5" y="197.9" width="2" height="2" fill="#111"/><rect x="2978.5" y="201.9" width="2" height="2" fill="#111"/><rect x="2978.5" y="205.9" width="2" height="2" fill="#111"/><rect x="2978.5" y="209.9" width="2" height="2" fill="#111"/><rect x="2978.5" y="213.9" width="2" height="2" fill="#111"/><rect x="2995.3" y="197.9" width="2" height="2" fill="#111"/><rect x="2995.3" y="201.9" width="2" height="2" fill="#111"/><rect x="2995.3" y="205.9" width="2" height="2" fill="#111"/><rect x="2995.3" y="209.9" width="2" height="2" fill="#111"/><rect x="2995.3" y="213.9" width="2" height="2" fill="#111"/><rect x="2982.7" y="197.9" width="2" height="2" fill="#888"/><rect x="2982.7" y="213.9" width="2" height="2" fill="#888"/><rect x="2991.1" y="197.9" width="2" height="2" fill="#888"/><rect x="2991.1" y="213.9" width="2" height="2" fill="#888"/><rect x="2986.7" y="196.2" width="2.6" height="21.4" fill="#111"/></svg>
<svg style="position:absolute;left:2983px;top:238px" width="11" height="9" viewBox="0 0 11 9"><polygon points="0,9 5.5,3.5 11,9 11,5.5 5.5,0 0,5.5" fill="#c4c4c4"/></svg>
<svg style="position:absolute;left:2983.5px;top:1504.0px" width="11" height="9" viewBox="0 0 11 9"><polygon points="0,0 5.5,5.5 11,0 11,3.5 5.5,9 0,3.5" fill="#c4c4c4"/></svg>
<div style="position:absolute;left:2975px;top:504px;width:4px;height:8px;background:#7070f8;"></div>
<div style="position:absolute;left:2975px;top:627px;width:4px;height:8px;background:#7070f8;"></div>
<div style="position:absolute;left:2975px;top:749px;width:4px;height:8px;background:#0000ff;"></div>
<div style="position:absolute;left:2975px;top:873px;width:4px;height:8px;background:#7070f8;"></div>
<div style="position:absolute;left:2975px;top:996px;width:4px;height:8px;background:#0000ff;"></div>
<div style="position:absolute;left:2975px;top:1119px;width:4px;height:8px;background:#0000ff;"></div>
<div style="position:absolute;left:2975px;top:1241px;width:4px;height:8px;background:#7070f8;"></div>
<div style="position:absolute;left:2983px;top:1238px;width:10px;height:10px;border-radius:50%;background:#ff0000"></div>
<div style="position:absolute;left:1498px;top:412px;width:9px;height:679px;background:#efefef;"></div>
<div style="position:absolute;left:1153px;top:412px;width:345px;height:679px;box-sizing:border-box;background:#fff;border:1.5px solid #7c8088"></div>
<div style="position:absolute;left:1155px;top:414px;width:307px;height:32px;background:#b4b4b4;"></div>
<div style="position:absolute;left:1463px;top:414px;width:33px;height:675px;background:#efefef;"></div>
<svg style="position:absolute;left:1473.5px;top:427.0px" width="11" height="9" viewBox="0 0 11 9"><polygon points="0,9 5.5,3.5 11,9 11,5.5 5.5,0 0,5.5" fill="#c4c4c4"/></svg>
<svg style="position:absolute;left:1473.5px;top:1068.0px" width="11" height="9" viewBox="0 0 11 9"><polygon points="0,0 5.5,5.5 11,0 11,3.5 5.5,9 0,3.5" fill="#c4c4c4"/></svg>
<div style="position:absolute;left:1163.9px;top:417.72px;font-family:'Liberation Sans',sans-serif;font-size:24px;line-height:normal;color:#1a7ad8;font-weight:normal;font-style:normal;white-space:pre;letter-spacing:-0.362px;">&lt;all&gt;</div>
<div style="position:absolute;left:1162.1px;top:449.72px;font-family:'Liberation Sans',sans-serif;font-size:24px;line-height:normal;color:#000;font-weight:normal;font-style:normal;white-space:pre;letter-spacing:-0.546px;">Upp::String</div>
<div style="position:absolute;left:1162.1px;top:481.72px;font-family:'Liberation Sans',sans-serif;font-size:24px;line-height:normal;color:#000;font-weight:normal;font-style:normal;white-space:pre;letter-spacing:-1.319px;">Upp::String::SSPECIAL</div>
<div style="position:absolute;left:1162.1px;top:513.72px;font-family:'Liberation Sans',sans-serif;font-size:24px;line-height:normal;color:#000;font-weight:normal;font-style:normal;white-space:pre;letter-spacing:-0.295px;">Upp::Moveable</div>
<div style="position:absolute;left:1162.1px;top:545.72px;font-family:'Liberation Sans',sans-serif;font-size:24px;line-height:normal;color:#000;font-weight:normal;font-style:normal;white-space:pre;letter-spacing:-0.562px;">Upp::AString</div>
<div style="position:absolute;left:1162.1px;top:577.72px;font-family:'Liberation Sans',sans-serif;font-size:24px;line-height:normal;color:#000;font-weight:normal;font-style:normal;white-space:pre;letter-spacing:-0.455px;">Upp::String0</div>
<div style="position:absolute;left:1162.1px;top:609.72px;font-family:'Liberation Sans',sans-serif;font-size:24px;line-height:normal;color:#000;font-weight:normal;font-style:normal;white-space:pre;letter-spacing:-0.935px;">Upp::EmptyClass</div>
<div style="position:absolute;left:1506px;top:412px;width:1392px;height:679px;box-sizing:border-box;background:#fff;border:1.5px solid #7c8088"></div>
<div style="position:absolute;left:2863px;top:414px;width:32px;height:675px;background:#efefef;"></div>
<div style="position:absolute;left:2863px;top:448px;width:32px;height:69px;background:#c8c8c8;"></div>
<svg style="position:absolute;left:2873.5px;top:427.0px" width="11" height="9" viewBox="0 0 11 9"><polygon points="0,9 5.5,3.5 11,9 11,5.5 5.5,0 0,5.5" fill="#555"/></svg>
<svg style="position:absolute;left:2873.5px;top:1067.0px" width="11" height="9" viewBox="0 0 11 9"><polygon points="0,0 5.5,5.5 11,0 11,3.5 5.5,9 0,3.5" fill="#555"/></svg>
<svg style="position:absolute;left:1511.3px;top:418px" width="23" height="23" viewBox="0 0 23 23"><circle cx="11.5" cy="11.5" r="10" fill="#ffff00" stroke="#000" stroke-width="2"/></svg>
<div style="position:absolute;left:1540px;top:417.92px;font-family:'Liberation Sans',sans-serif;font-size:24px;line-height:normal;color:#000;font-weight:normal;font-style:normal;white-space:pre;letter-spacing:-0.341px;"><b>AssignLen</b><span style="color:#0000e0">(const char *</span><b style="color:#800000">s</b><span style="color:#0000e0">, int </span><b style="color:#800000">slen</b><span style="color:#0000e0">)</span> <span style="color:#707070;position:relative;top:-3px">→</span> <span style="color:#0000e0">void</span></div>
<svg style="position:absolute;left:1511.3px;top:450px" width="23" height="23" viewBox="0 0 23 23"><circle cx="11.5" cy="11.5" r="10" fill="#ffff00" stroke="#000" stroke-width="2"/></svg>
<div style="position:absolute;left:1540px;top:449.92px;font-family:'Liberation Sans',sans-serif;font-size:24px;line-height:normal;color:#000;font-weight:normal;font-style:normal;white-space:pre;letter-spacing:-0.432px;"><b>Shrink</b><span style="color:#0000e0">()</span> <span style="color:#707070;position:relative;top:-3px">→</span> <span style="color:#0000e0">void</span></div>
<svg style="position:absolute;left:1511.3px;top:482px" width="23" height="23" viewBox="0 0 23 23"><circle cx="11.5" cy="11.5" r="10" fill="#ffff00" stroke="#000" stroke-width="2"/></svg>
<div style="position:absolute;left:1540px;top:481.92px;font-family:'Liberation Sans',sans-serif;font-size:24px;line-height:normal;color:#000;font-weight:normal;font-style:normal;white-space:pre;letter-spacing:-0.101px;"><b>Swap</b><span style="color:#0000e0">(</span>String<span style="color:#0000e0">&amp; </span><b style="color:#800000">b</b><span style="color:#0000e0">)</span> <span style="color:#707070;position:relative;top:-3px">→</span> <span style="color:#0000e0">void</span></div>
<svg style="position:absolute;left:1511.3px;top:514px" width="23" height="23" viewBox="0 0 23 23"><circle cx="11.5" cy="11.5" r="10" fill="#ffff00" stroke="#000" stroke-width="2"/></svg>
<div style="position:absolute;left:1540px;top:513.92px;font-family:'Liberation Sans',sans-serif;font-size:24px;line-height:normal;color:#000;font-weight:normal;font-style:normal;white-space:pre;letter-spacing:-0.229px;"><b>GetCharCount</b><span style="color:#0000e0">() const</span> <span style="color:#707070;position:relative;top:-3px">→</span> <span style="color:#0000e0">int</span></div>
<svg style="position:absolute;left:1511.3px;top:546px" width="23" height="23" viewBox="0 0 23 23"><circle cx="11.5" cy="11.5" r="10" fill="#ffff00" stroke="#000" stroke-width="2"/></svg>
<div style="position:absolute;left:1540px;top:545.92px;font-family:'Liberation Sans',sans-serif;font-size:24px;line-height:normal;color:#000;font-weight:normal;font-style:normal;white-space:pre;letter-spacing:-0.192px;"><b>GetVoid</b><span style="color:#0000e0">()</span> <span style="color:#707070;position:relative;top:-3px">→</span> String</div>
<svg style="position:absolute;left:1511.3px;top:578px" width="23" height="23" viewBox="0 0 23 23"><circle cx="11.5" cy="11.5" r="10" fill="#ffff00" stroke="#000" stroke-width="2"/></svg>
<div style="position:absolute;left:1540px;top:577.92px;font-family:'Liberation Sans',sans-serif;font-size:24px;line-height:normal;color:#000;font-weight:normal;font-style:normal;white-space:pre;letter-spacing:-0.048px;"><b>IsVoid</b><span style="color:#0000e0">() const</span> <span style="color:#707070;position:relative;top:-3px">→</span> <span style="color:#0000e0">bool</span></div>
<svg style="position:absolute;left:1511.3px;top:610px" width="23" height="23" viewBox="0 0 23 23"><circle cx="11.5" cy="11.5" r="10" fill="#00ee00" stroke="#000" stroke-width="2"/></svg>
<div style="position:absolute;left:1540px;top:609.92px;font-family:'Liberation Sans',sans-serif;font-size:24px;line-height:normal;color:#000;font-weight:normal;font-style:normal;white-space:pre;letter-spacing:-0.027px;"><b>Make</b><span style="color:#0000e0">(int </span><b style="color:#800000">alloc</b><span style="color:#0000e0">, </span>Maker <b style="color:#800000">m</b><span style="color:#0000e0">)</span> <span style="color:#707070;position:relative;top:-3px">→</span> String</div>
<svg style="position:absolute;left:1511.3px;top:642px" width="23" height="23" viewBox="0 0 23 23"><polygon points="11.5,1.5 21.5,11.5 11.5,21.5 1.5,11.5" fill="#fff" stroke="#555" stroke-width="1.8"/></svg>
<div style="position:absolute;left:1540px;top:641.92px;font-family:'Liberation Sans',sans-serif;font-size:24px;line-height:normal;color:#000;font-weight:normal;font-style:normal;white-space:pre;letter-spacing:-1.305px;"><b>SPECIAL</b> <span style="color:#707070;position:relative;top:-3px">→</span> Upp::String::SSPECIAL</div>
<svg style="position:absolute;left:1511.3px;top:674px" width="23" height="23" viewBox="0 0 23 23"><circle cx="11.5" cy="11.5" r="10" fill="#ffff00" stroke="#000" stroke-width="2"/></svg>
<div style="position:absolute;left:1540px;top:673.92px;font-family:'Liberation Sans',sans-serif;font-size:24px;line-height:normal;color:#000;font-weight:normal;font-style:normal;white-space:pre;letter-spacing:-0.308px;"><b>ToStd</b><span style="color:#0000e0">() const</span> <span style="color:#707070;position:relative;top:-3px">→</span> std::string</div>
<svg style="position:absolute;left:1511.3px;top:706px" width="23" height="23" viewBox="0 0 23 23"><circle cx="11.5" cy="11.5" r="10" fill="#ffff00" stroke="#000" stroke-width="2"/></svg>
<div style="position:absolute;left:1540px;top:705.92px;font-family:'Liberation Sans',sans-serif;font-size:24px;line-height:normal;color:#000;font-weight:normal;font-style:normal;white-space:pre;letter-spacing:-0.012px;"><b>ToString</b><span style="color:#0000e0">() const</span> <span style="color:#707070;position:relative;top:-3px">→</span> <span style="color:#0000e0">const </span>String<span style="color:#0000e0">&amp;</span></div>
<svg style="position:absolute;left:1511.3px;top:738px" width="23" height="23" viewBox="0 0 23 23"><circle cx="11.5" cy="11.5" r="10" fill="#ffff00" stroke="#000" stroke-width="2"/></svg>
<div style="position:absolute;left:1540px;top:737.92px;font-family:'Liberation Sans',sans-serif;font-size:24px;line-height:normal;color:#000;font-weight:normal;font-style:normal;white-space:pre;letter-spacing:-0.124px;"><b>ToWString</b><span style="color:#0000e0">() const</span> <span style="color:#707070;position:relative;top:-3px">→</span> WString</div>
<svg style="position:absolute;left:1511.3px;top:770px" width="23" height="23" viewBox="0 0 23 23"><circle cx="11.5" cy="11.5" r="10" fill="#ffff00" stroke="#000" stroke-width="2"/></svg>
<div style="position:absolute;left:1540px;top:769.92px;font-family:'Liberation Sans',sans-serif;font-size:24px;line-height:normal;color:#000;font-weight:normal;font-style:normal;white-space:pre;letter-spacing:-0.059px;"><b>Alloc</b><span style="color:#0000e0">(int </span><b style="color:#800000">count</b><span style="color:#0000e0">, char&amp; </span><b style="color:#800000">kind</b><span style="color:#0000e0">)</span> <span style="color:#707070;position:relative;top:-3px">→</span> <span style="color:#0000e0">char *</span></div>
<svg style="position:absolute;left:1511.3px;top:802px" width="23" height="23" viewBox="0 0 23 23"><circle cx="11.5" cy="11.5" r="10" fill="#ffff00" stroke="#000" stroke-width="2"/></svg>
<div style="position:absolute;left:1540px;top:801.92px;font-family:'Liberation Sans',sans-serif;font-size:24px;line-height:normal;color:#000;font-weight:normal;font-style:normal;white-space:pre;letter-spacing:-0.148px;"><b>Alloc_</b><span style="color:#0000e0">(int </span><b style="color:#800000">count</b><span style="color:#0000e0">, char&amp; </span><b style="color:#800000">kind</b><span style="color:#0000e0">)</span> <span style="color:#707070;position:relative;top:-3px">→</span> <span style="color:#0000e0">char *</span></div>
<svg style="position:absolute;left:1511.3px;top:834px" width="23" height="23" viewBox="0 0 23 23"><circle cx="11.5" cy="11.5" r="10" fill="#ffff00" stroke="#000" stroke-width="2"/></svg>
<div style="position:absolute;left:1540px;top:833.92px;font-family:'Liberation Sans',sans-serif;font-size:24px;line-height:normal;color:#000;font-weight:normal;font-style:normal;white-space:pre;letter-spacing:-0.217px;"><b>Assign</b><span style="color:#0000e0">(const </span>String0<span style="color:#0000e0">&amp; </span><b style="color:#800000">s</b><span style="color:#0000e0">)</span> <span style="color:#707070;position:relative;top:-3px">→</span> <span style="color:#0000e0">void</span></div>
<svg style="position:absolute;left:1511.3px;top:866px" width="23" height="23" viewBox="0 0 23 23"><circle cx="11.5" cy="11.5" r="10" fill="#ffff00" stroke="#000" stroke-width="2"/></svg>
<div style="position:absolute;left:1540px;top:865.92px;font-family:'Liberation Sans',sans-serif;font-size:24px;line-height:normal;color:#000;font-weight:normal;font-style:normal;white-space:pre;letter-spacing:-0.196px;"><b>Cat</b><span style="color:#0000e0">(const char *</span><b style="color:#800000">s</b><span style="color:#0000e0">, int </span><b style="color:#800000">len</b><span style="color:#0000e0">)</span> <span style="color:#707070;position:relative;top:-3px">→</span> <span style="color:#0000e0">void</span></div>
<svg style="position:absolute;left:1511.3px;top:898px" width="23" height="23" viewBox="0 0 23 23"><circle cx="11.5" cy="11.5" r="10" fill="#ffff00" stroke="#000" stroke-width="2"/></svg>
<div style="position:absolute;left:1540px;top:897.92px;font-family:'Liberation Sans',sans-serif;font-size:24px;line-height:normal;color:#000;font-weight:normal;font-style:normal;white-space:pre;letter-spacing:-0.037px;"><b>Cat</b><span style="color:#0000e0">(int </span><b style="color:#800000">c</b><span style="color:#0000e0">)</span> <span style="color:#707070;position:relative;top:-3px">→</span> <span style="color:#0000e0">void</span> AString<span style="color:#0000e0">&lt;</span>String0<span style="color:#0000e0">&gt;::</span></div>
<svg style="position:absolute;left:1511.3px;top:930px" width="23" height="23" viewBox="0 0 23 23"><circle cx="11.5" cy="11.5" r="10" fill="#ffff00" stroke="#000" stroke-width="2"/></svg>
<div style="position:absolute;left:1540px;top:929.92px;font-family:'Liberation Sans',sans-serif;font-size:24px;line-height:normal;color:#000;font-weight:normal;font-style:normal;white-space:pre;letter-spacing:-0.276px;"><b>Cat</b><span style="color:#0000e0">(int </span><b style="color:#800000">c</b><span style="color:#0000e0">)</span> <span style="color:#707070;position:relative;top:-3px">→</span> <span style="color:#0000e0">void</span></div>
<svg style="position:absolute;left:1511.3px;top:962px" width="23" height="23" viewBox="0 0 23 23"><circle cx="11.5" cy="11.5" r="10" fill="#ffff00" stroke="#000" stroke-width="2"/></svg>
<div style="position:absolute;left:1540px;top:961.92px;font-family:'Liberation Sans',sans-serif;font-size:24px;line-height:normal;color:#000;font-weight:normal;font-style:normal;white-space:pre;letter-spacing:-0.045px;"><b>Cat</b><span style="color:#0000e0">()</span> <span style="color:#707070;position:relative;top:-3px">→</span> String<span style="color:#0000e0">&amp;</span> AString<span style="color:#0000e0">&lt;</span>String0<span style="color:#0000e0">&gt;::</span></div>
<svg style="position:absolute;left:1511.3px;top:994px" width="23" height="23" viewBox="0 0 23 23"><circle cx="11.5" cy="11.5" r="10" fill="#ffff00" stroke="#000" stroke-width="2"/></svg>
<div style="position:absolute;left:1540px;top:993.92px;font-family:'Liberation Sans',sans-serif;font-size:24px;line-height:normal;color:#000;font-weight:normal;font-style:normal;white-space:pre;letter-spacing:-0.057px;"><b>Cat</b><span style="color:#0000e0">(const </span>bchar <span style="color:#0000e0">*</span><b style="color:#800000">s</b><span style="color:#0000e0">, int </span><b style="color:#800000">len</b><span style="color:#0000e0">)</span> <span style="color:#707070;position:relative;top:-3px">→</span> <span style="color:#0000e0">void</span> AString<span style="color:#0000e0">&lt;</span>String0<span style="color:#0000e0">&gt;::</span></div>
<svg style="position:absolute;left:1511.3px;top:1026px" width="23" height="23" viewBox="0 0 23 23"><circle cx="11.5" cy="11.5" r="10" fill="#ffff00" stroke="#000" stroke-width="2"/></svg>
<div style="position:absolute;left:1540px;top:1025.92px;font-family:'Liberation Sans',sans-serif;font-size:24px;line-height:normal;color:#000;font-weight:normal;font-style:normal;white-space:pre;letter-spacing:0.007px;"><b>Cat</b><span style="color:#0000e0">(const </span>String<span style="color:#0000e0">&amp; </span><b style="color:#800000">s</b><span style="color:#0000e0">, int </span><b style="color:#800000">len</b><span style="color:#0000e0">)</span> <span style="color:#707070;position:relative;top:-3px">→</span> <span style="color:#0000e0">void</span> AString<span style="color:#0000e0">&lt;</span>String0<span style="color:#0000e0">&gt;::</span></div>
<svg style="position:absolute;left:1511.3px;top:1058px" width="23" height="23" viewBox="0 0 23 23"><circle cx="11.5" cy="11.5" r="10" fill="#ffff00" stroke="#000" stroke-width="2"/></svg>
<div style="position:absolute;left:1540px;top:1057.92px;font-family:'Liberation Sans',sans-serif;font-size:24px;line-height:normal;color:#000;font-weight:normal;font-style:normal;white-space:pre;letter-spacing:-0.060px;"><b>Cat</b><span style="color:#0000e0">(const </span>tchar <span style="color:#0000e0">*</span><b style="color:#800000">s</b><span style="color:#0000e0">, const </span>tchar <span style="color:#0000e0">*</span><b style="color:#800000">lim</b><span style="color:#0000e0">)</span> <span style="color:#707070;position:relative;top:-3px">→</span> <span style="color:#0000e0">void</span> AString<span style="color:#0000e0">&lt;</span>String0<span style="color:#0000e0">&gt;::</span></div>
</body></html>
